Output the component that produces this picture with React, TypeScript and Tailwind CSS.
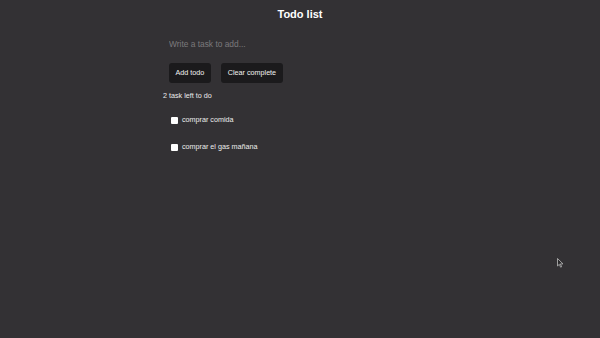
import { useState } from 'react'

type Todo = { id: number; text: string; done: boolean }

const INITIAL: Todo[] = [
  { id: 1, text: 'comprar comida', done: false },
  { id: 2, text: 'comprar el gas mañana', done: false },
]

export default function App() {
  const [todos, setTodos] = useState<Todo[]>(INITIAL)
  const [draft, setDraft] = useState('')

  const left = todos.filter(t => !t.done).length

  const addTodo = () => {
    if (!draft.trim()) return
    setTodos([...todos, { id: Date.now(), text: draft.trim(), done: false }])
    setDraft('')
  }

  return (
    <div className="relative min-h-screen bg-[#333134] text-[#ececec] font-['Liberation_Sans',Arial,sans-serif]">
      <h1 className="pt-[8px] text-center text-[11px] font-bold leading-[13px] text-white">Todo list</h1>

      <div className="mx-auto w-[274px]">
        {/* New task input */}
        <input
          value={draft}
          onChange={e => setDraft(e.target.value)}
          placeholder="Write a task to add..."
          className="mt-[13px] block h-[20px] w-full bg-transparent pl-[6px] text-[8.4px] text-[#ddd] outline-none placeholder:text-[#7b797c]"
        />

        <div className="mt-[9px] flex gap-[10.5px] pl-[6px]">
          <button
            onClick={addTodo}
            className="h-[20px] rounded-[3px] bg-[#1b1a1c] px-[6.5px] text-[7.2px] leading-none text-[#f2f2f2]"
          >
            Add todo
          </button>
          <button
            onClick={() => setTodos(todos.filter(t => !t.done))}
            className="h-[20px] rounded-[3px] bg-[#1b1a1c] px-[6.5px] text-[7.2px] leading-none text-[#f2f2f2]"
          >
            Clear complete
          </button>
        </div>

        <div className="mt-[9px] h-[8px] text-[7.2px] leading-[8px]">{left} task left to do</div>

        <ul className="mt-[16px] flex flex-col gap-[19px] pl-[8px]">
          {todos.map(t => (
            <li
              key={t.id}
              className="flex h-[8px] items-center gap-[4px] text-[7.2px] leading-[8px] cursor-pointer"
              onClick={() => setTodos(todos.map(x => (x.id === t.id ? { ...x, done: !x.done } : x)))}
            >
              <span className="flex h-[7px] w-[7px] items-center justify-center rounded-[1px] bg-white text-[6px] text-black">
                {t.done ? '✓' : ''}
              </span>
              <span>{t.text}</span>
            </li>
          ))}
        </ul>
      </div>

      {/* mouse pointer captured in the screenshot */}
      <svg className="absolute left-[557px] top-[258px]" width="7" height="10" viewBox="0 0 7 10">
        <path d="M0.5 0.5 L0.5 8 L2.3 6.3 L3.6 9.2 L4.6 8.8 L3.4 5.9 L6 5.9 Z" fill="#2a292b" stroke="#bdbdbd" strokeWidth="0.8" />
      </svg>
    </div>
  )
}
